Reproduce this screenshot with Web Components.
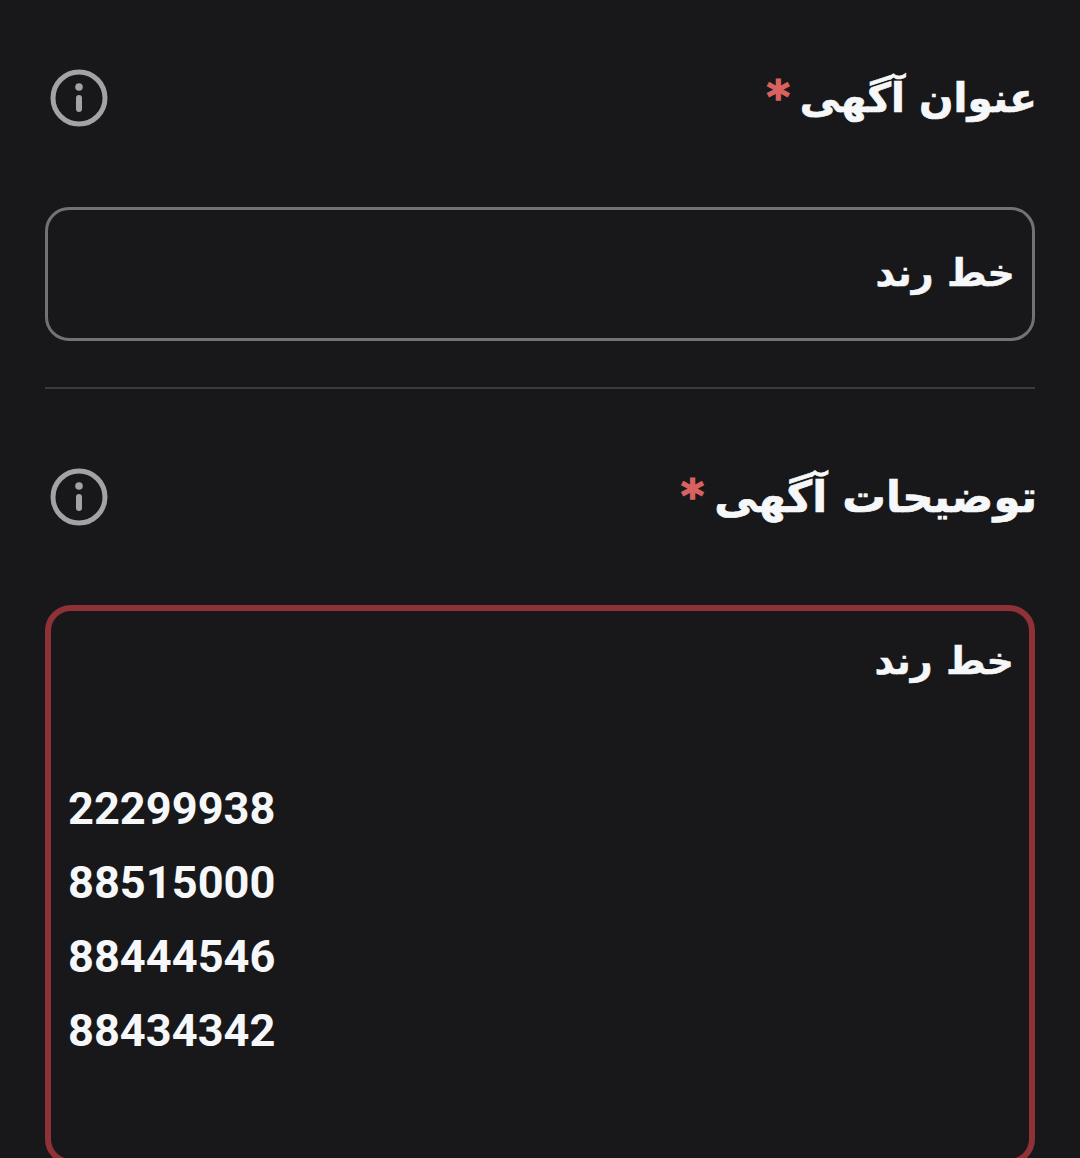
<!DOCTYPE html>
<html lang="fa">
<head>
<meta charset="utf-8">
<title>form</title>
<style>
html,body{margin:0;padding:0;background:#18181a;height:1158px;overflow:hidden;}
body{font-family:Roboto,"DejaVu Sans",sans-serif;}
</style>
</head>
<body>
<ad-form>
  <ad-label>عنوان آگهی</ad-label>
  <ad-input>خط رند</ad-input>
  <ad-divider></ad-divider>
  <ad-label second>توضیحات آگهی</ad-label>
  <ad-textarea>
    <div slot="title">خط رند</div>
    <div>22299938</div>
    <div>88515000</div>
    <div>88444546</div>
    <div>88434342</div>
  </ad-textarea>
</ad-form>
<script>
class AdForm extends HTMLElement{
  constructor(){
    super();
    this.attachShadow({mode:'open'}).innerHTML=`
    <style>
    :host{display:flex;flex-direction:column;padding:0 45px;}
    </style>
    <slot></slot>`;
  }
}
class AdLabel extends HTMLElement{
  constructor(){
    super();
    this.attachShadow({mode:'open'}).innerHTML=`
    <style>
    :host{display:flex;direction:rtl;align-items:center;justify-content:space-between;height:114px;margin-top:41px;color:#f6f7f8;--size:40.5px;}
    :host([second]){margin-top:51px;--size:43.5px;}
    .t{font:700 var(--size)/114px "DejaVu Sans",sans-serif;-webkit-text-stroke:.7px currentColor;white-space:nowrap;display:flex;align-items:center;gap:10px;margin-right:-2px;}
    .s{color:#d9615f;font:700 44px/1 "DejaVu Sans",sans-serif;-webkit-text-stroke:1.5px currentColor;margin-top:-2px;}
    svg{width:58px;height:58px;margin-left:5px;display:block;}
    </style>
    <div class="t"><span><slot></slot></span><span class="s">*</span></div>
    <svg viewBox="0 0 58 58" fill="none">
      <circle cx="29" cy="29" r="26" stroke="#a3a3a5" stroke-width="5"/>
      <circle cx="29" cy="18" r="3.8" fill="#a3a3a5"/>
      <rect x="26" y="26" width="6" height="17" rx="3" fill="#a3a3a5"/>
    </svg>`;
  }
}
class AdInput extends HTMLElement{
  constructor(){
    super();
    this.attachShadow({mode:'open'}).innerHTML=`
    <style>
    :host{display:flex;direction:rtl;align-items:center;box-sizing:border-box;height:134px;margin-top:52px;padding:0 17px 3px;border:3px solid #727274;border-radius:24px;color:#f6f7f8;font:700 38px "DejaVu Sans",sans-serif;-webkit-text-stroke:.5px currentColor;}
    </style>
    <slot></slot>`;
  }
}
class AdDivider extends HTMLElement{
  constructor(){
    super();
    this.attachShadow({mode:'open'}).innerHTML=`
    <style>:host{display:block;height:2px;background:#3a3a3c;margin-top:46px;}</style>`;
  }
}
class AdTextarea extends HTMLElement{
  constructor(){
    super();
    this.attachShadow({mode:'open'}).innerHTML=`
    <style>
    :host{display:block;box-sizing:border-box;height:560px;margin-top:51px;padding:13px 15px 14px 17px;border:6px solid #8f3137;border-radius:26px;color:#f6f7f8;}
    .title{direction:rtl;font:700 38px/74px "DejaVu Sans",sans-serif;-webkit-text-stroke:.5px currentColor;height:74px;}
    .lines{display:grid;grid-auto-rows:74px;margin-top:74px;font:700 45.2px/74px Roboto,sans-serif;}
    </style>
    <div class="title"><slot name="title"></slot></div>
    <div class="lines"><slot></slot></div>`;
  }
}
customElements.define('ad-form',AdForm);
customElements.define('ad-label',AdLabel);
customElements.define('ad-input',AdInput);
customElements.define('ad-divider',AdDivider);
customElements.define('ad-textarea',AdTextarea);
</script>
</body>
</html>
